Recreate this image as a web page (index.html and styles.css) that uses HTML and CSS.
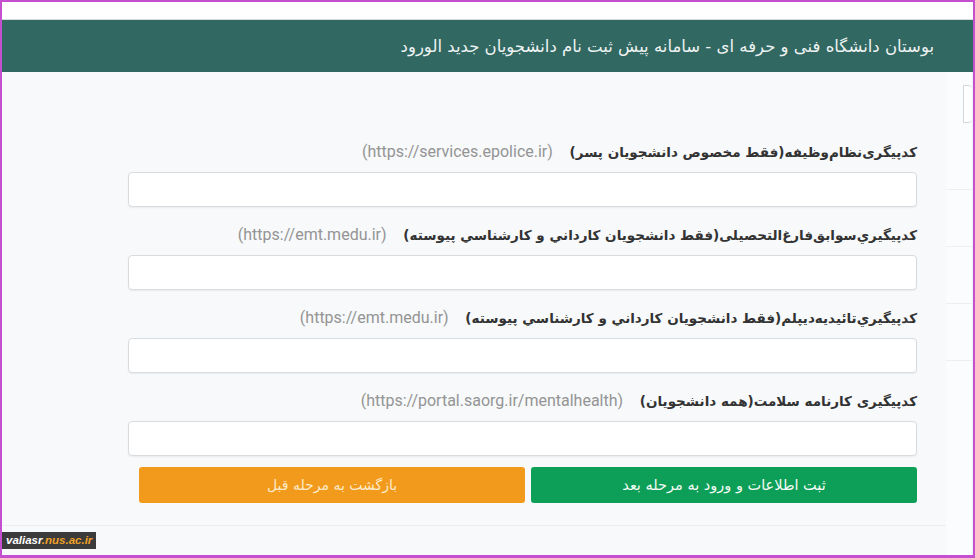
FILE: index.html
```html
<!DOCTYPE html>
<html lang="fa" dir="rtl">
<head>
    <meta charset="UTF-8">
    <meta name="viewport" content="width=device-width, initial-scale=1.0">
    <title>سامانه پیش ثبت نام</title>
    <link rel="stylesheet" href="styles.css">
</head>
<body>
    <div class="frame">
        <div class="top-strip"></div>
        <header class="header">
            <h1>بوستان دانشگاه فنی و حرفه ای - سامانه پیش ثبت نام دانشجویان جدید الورود</h1>
        </header>

        <div class="main">
            <aside class="side">
                <div class="side-box"></div>
                <div class="side-row"></div>
                <div class="side-row"></div>
                <div class="side-row"></div>
                <div class="side-row"></div>
            </aside>

            <div class="content">
                <form class="track-form">
                    <div class="field">
                        <label for="code-military">کدپیگری‌نظام‌وظیفه(فقط مخصوص دانشجویان پسر) <span class="hint" dir="ltr">(https://services.epolice.ir)</span></label>
                        <input type="text" id="code-military">
                    </div>

                    <div class="field">
                        <label for="code-grad">کدپيگيري‌سوابق‌فارغ‌التحصيلى(فقط دانشجويان كارداني و كارشناسي پيوسته) <span class="hint" dir="ltr">(https://emt.medu.ir)</span></label>
                        <input type="text" id="code-grad">
                    </div>

                    <div class="field">
                        <label for="code-diploma">کدپيگيري‌تائيديه‌ديپلم(فقط دانشجويان كارداني و كارشناسي پيوسته) <span class="hint" dir="ltr">(https://emt.medu.ir)</span></label>
                        <input type="text" id="code-diploma">
                    </div>

                    <div class="field">
                        <label for="code-health">کدپیگیری کارنامه سلامت(همه دانشجویان) <span class="hint" dir="ltr">(https://portal.saorg.ir/mentalhealth)</span></label>
                        <input type="text" id="code-health">
                    </div>

                    <div class="actions">
                        <button type="submit" class="btn btn-next">ثبت اطلاعات و ورود به مرحله بعد</button>
                        <button type="button" class="btn btn-back">بازگشت به مرحله قبل</button>
                    </div>
                </form>
                <div class="divider"></div>
            </div>
        </div>

        <div class="watermark" dir="ltr"><span class="wm-a">valiasr</span><span class="wm-b">.nus.ac.ir</span></div>
    </div>
</body>
</html>
```

FILE: styles.css
```css
* {
    box-sizing: border-box;
}

html, body {
    margin: 0;
    padding: 0;
    height: 100%;
}

body {
    background-color: #ffffff;
    font-family: "DejaVu Sans", "Noto Sans", sans-serif;
    color: #333;
    overflow: hidden;
}

.frame {
    position: relative;
    width: 975px;
    height: 558px;
    border: 2px solid #c44fcf;
    border-bottom-width: 3px;
    background-color: #f7f9fb;
    display: flex;
    flex-direction: column;
    overflow: hidden;
}

.top-strip {
    height: 18px;
    background-color: #ffffff;
    border-bottom: 1px solid #d6dcdc;
}

/* Header */
.header {
    height: 52px;
    background-color: #316862;
    display: flex;
    align-items: center;
    padding-right: 39px;
}

.header h1 {
    margin: 0;
    font-size: 16.5px;
    font-weight: normal;
    color: #eef3f2;
}

.main {
    flex: 1;
    display: flex;
}

/* Right side column */
.side {
    width: 27px;
    background-color: #fbfcfd;
    border-right: 1px solid #eef1f4;
    padding-top: 13px;
}

.side-box {
    width: 9px;
    height: 38px;
    margin-left: auto;
    border: 1px solid #d3d7db;
    border-right: none;
    border-radius: 0 4px 4px 0;
    background-color: #fff;
    margin-bottom: 66px;
}

.side-row {
    height: 57px;
    border-top: 1px solid #edf0f3;
}

.content {
    flex: 1;
    padding-top: 70px;
    padding-right: 29px;
}

/* Form */
.track-form {
    width: 789px;
    display: flex;
    flex-direction: column;
}

.field {
    display: flex;
    flex-direction: column;
    margin-bottom: 18px;
}

.field label {
    font-size: 13.5px;
    font-weight: bold;
    color: #333;
    line-height: 20px;
    margin-bottom: 10px;
}

.field .hint {
    font-family: Roboto, "Liberation Sans", sans-serif;
    font-weight: normal;
    font-size: 16px;
    color: #949494;
    margin-right: 12px;
}

.field input {
    width: 100%;
    height: 35px;
    border: 1px solid #d9dcdf;
    border-radius: 4px;
    background-color: #fff;
    box-shadow: 0 1px 2px rgba(0, 0, 0, 0.06);
    outline: none;
}

.actions {
    display: flex;
    gap: 6px;
    margin-top: -7px;
    padding-left: 11px;
}

.btn {
    flex: 1;
    height: 36px;
    border: none;
    border-radius: 3px;
    font-family: "DejaVu Sans", sans-serif;
    font-size: 14.5px;
    cursor: pointer;
}

.btn-next {
    background-color: #0d9f57;
    color: #f4fbf6;
}

.btn-back {
    background-color: #f29a1c;
    color: #fdebc8;
    font-size: 14px;
}

.divider {
    margin-top: 22px;
    margin-right: -29px;
    border-top: 1px solid #eceff2;
}

/* Watermark */
.watermark {
    position: absolute;
    left: 0;
    bottom: 6px;
    width: 94px;
    height: 17px;
    background-color: #3b3b3b;
    padding-left: 4px;
    font-family: "Liberation Sans", sans-serif;
    font-size: 11.5px;
    font-weight: bold;
    font-style: italic;
    line-height: 17px;
    white-space: nowrap;
    overflow: hidden;
}

.wm-a {
    color: #ffffff;
}

.wm-b {
    color: #f0a126;
}
```
